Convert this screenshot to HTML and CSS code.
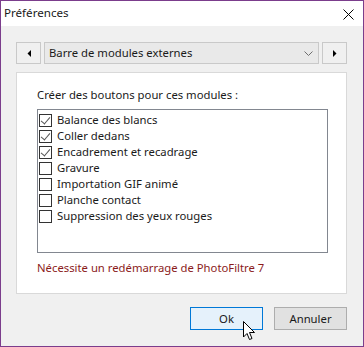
FILE: index.html
```html
<!DOCTYPE html>
<html lang="fr">
<head>
<meta charset="utf-8">
<title>Préférences</title>
<link rel="stylesheet" href="styles.css">
</head>
<body>
<div class="window">
  <div class="titlebar">
    <span class="title">Préférences</span>
    <svg class="close" width="11" height="11" viewBox="0 0 11 11"><path d="M0.5 0.5 L10.5 10.5 M10.5 0.5 L0.5 10.5" stroke="#000" stroke-width="1" fill="none"/></svg>
  </div>
  <div class="content">
    <div class="navrow">
      <div class="navbtn"><svg width="4" height="7" viewBox="0 0 4 7"><path d="M4 0 L0.5 3.5 L4 7 Z" fill="#000"/></svg></div>
      <div class="combo">
        <span>Barre de modules externes</span>
        <svg class="chev" width="9" height="5" viewBox="0 0 9 5"><path d="M0.5 0.5 L4.5 4.5 L8.5 0.5" stroke="#6e6e6e" fill="none"/></svg>
      </div>
      <div class="navbtn"><svg width="4" height="7" viewBox="0 0 4 7"><path d="M0 0 L3.5 3.5 L0 7 Z" fill="#000"/></svg></div>
    </div>
    <div class="panel">
      <div class="label">Créer des boutons pour ces modules :</div>
      <div class="listbox">
        <div class="item"><span class="cb checked"></span>Balance des blancs</div>
        <div class="item"><span class="cb checked"></span>Coller dedans</div>
        <div class="item"><span class="cb checked"></span>Encadrement et recadrage</div>
        <div class="item"><span class="cb"></span>Gravure</div>
        <div class="item"><span class="cb"></span>Importation GIF animé</div>
        <div class="item"><span class="cb"></span>Planche contact</div>
        <div class="item"><span class="cb"></span>Suppression des yeux rouges</div>
      </div>
      <div class="warning">Nécessite un redémarrage de PhotoFiltre 7</div>
    </div>
    <div class="buttons">
      <div class="btn default">Ok</div>
      <div class="btn">Annuler</div>
    </div>
  </div>
  <svg class="cursor" width="13" height="20" viewBox="0 0 13 20"><path d="M0.5 0.5 L0.5 16 L4 12.5 L6.5 18.5 L9 17.5 L6.5 11.5 L11.5 11.5 Z" fill="#fff" stroke="#000" stroke-width="1" stroke-linejoin="miter"/></svg>
</div>
</body>
</html>
```
FILE: styles.css
```css
* { box-sizing: border-box; }
html, body { margin: 0; padding: 0; }
body {
  font-family: "Noto Sans", "Open Sans", sans-serif;
  font-size: 11.3px;
  color: #1a1a1a;
  background: #fff;
}
.window {
  position: relative;
  width: 364px;
  height: 347px;
  border: 1px solid #7b3d8c;
  background: #f0f0f0;
  display: flex;
  flex-direction: column;
  overflow: hidden;
}
.titlebar {
  height: 25px;
  background: #fff;
  display: flex;
  align-items: center;
  justify-content: space-between;
  padding: 0 9px 0 3px;
  flex: none;
}
.title { font-size: 11.6px; line-height: 16px; padding-bottom: 1px; }
.close { margin-top: 1px; }
.content {
  flex: 1;
  padding: 16px 16px 0 15px;
  display: flex;
  flex-direction: column;
}
.navrow {
  display: flex;
  height: 22px;
  gap: 3px;
}
.navbtn {
  width: 25px;
  height: 22px;
  border: 1px solid #c9c9c9;
  background: #f0f0f0;
  display: flex;
  align-items: center;
  justify-content: center;
}
.combo {
  flex: 1;
  height: 22px;
  border: 1px solid #c9c9c9;
  background: #e9e9e9;
  display: flex;
  align-items: center;
  justify-content: space-between;
  padding: 0 5px 0 4px;
}
.combo span { line-height: 16px; }
.panel {
  margin-top: 8px;
  height: 222px;
  background: #fff;
  border: 1px solid #d9d9d9;
  padding: 14px 18px 0 20px;
  display: flex;
  flex-direction: column;
}
.label { line-height: 16px; height: 22px; }
.listbox {
  height: 144px;
  border: 1px solid #828790;
  padding: 2px 0 0 1px;
}
.item {
  height: 16px;
  line-height: 16px;
  display: flex;
  align-items: center;
  gap: 5px;
}
.cb {
  width: 13px;
  height: 13px;
  border: 1px solid #333;
  background: #fff;
  position: relative;
  flex: none;
}
.cb.checked::after {
  content: "";
  position: absolute;
  left: 3px;
  top: 0px;
  width: 4px;
  height: 8px;
  border-right: 1px solid #555;
  border-bottom: 1px solid #555;
  transform: rotate(40deg);
}
.warning {
  margin-top: 7px;
  color: #8b1b1b;
  line-height: 16px;
}
.buttons {
  display: flex;
  justify-content: flex-end;
  gap: 11px;
  margin-top: 13px;
}
.btn {
  width: 73px;
  height: 23px;
  border: 1px solid #adadad;
  background: #e1e1e1;
  display: flex;
  align-items: center;
  justify-content: center;
  line-height: 16px;
}
.btn.default {
  border-color: #0078d7;
  background: #e5f1fb;
}
.cursor {
  position: absolute;
  left: 242px;
  top: 320px;
}
```
